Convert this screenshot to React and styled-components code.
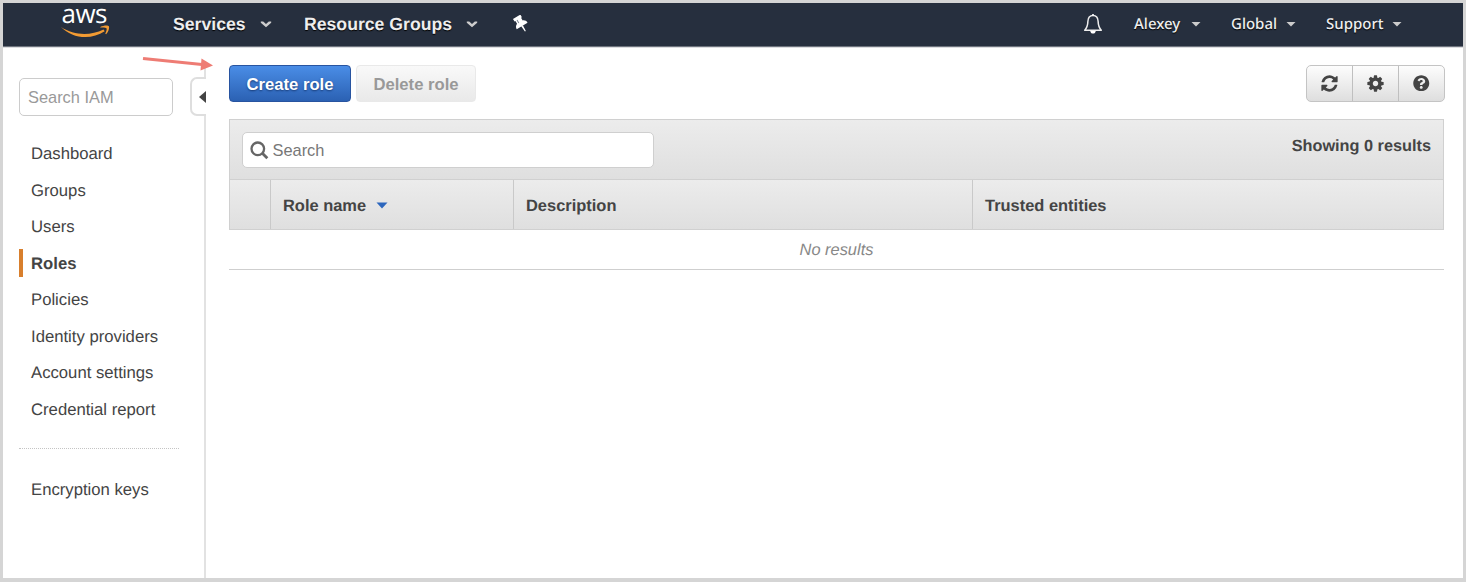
import React from 'react';
import styled, { createGlobalStyle, css } from 'styled-components';
import { FaQuestionCircle } from 'react-icons/fa';

const GlobalStyle = createGlobalStyle`
  * { box-sizing: border-box; }
  body { margin: 0; background: #d5d5d5; }
  button, input { font-family: inherit; }
`;

const Frame = styled.div`
  width: 1466px;
  height: 582px;
  padding: 3px 3px 4px;
  background: #d5d5d5;
  color: #444;
  font-family: 'Liberation Sans', Arial, sans-serif;
  font-size: 16.7px;
  line-height: 20px;
  text-rendering: geometricPrecision;
`;

const Page = styled.div`
  position: relative;
  display: flex;
  flex-direction: column;
  height: 575px;
  background: #fff;
`;

const Header = styled.header`
  display: flex;
  align-items: center;
  justify-content: space-between;
  flex: none;
  height: 44px;
  padding: 0 61px 2px 57px;
  background: #262f3e;
  border-bottom: 1px solid #6d737d;
  box-shadow: 0 1px 0 #dcdde0;
  color: #eee;
`;

const NavGroup = styled.nav`
  display: flex;
  align-items: center;
  height: 100%;
`;

const Logo = styled.svg`
  width: 50px;
  height: 40px;
  margin: -4px 63px 0 0;
  overflow: visible;
`;

const NavItem = styled.a`
  display: flex;
  align-items: center;
  width: ${(p) => p.$width}px;
  text-shadow: 0 1px 1px #000;
  ${(p) =>
    p.$primary
      ? css`
          gap: 14px;
          font-size: 17.65px;
          font-weight: 700;
        `
      : css`
          justify-content: space-between;
          margin-left: ${p.$before}px;
          font-family: 'Noto Sans', sans-serif;
          font-size: 15px;
          font-weight: 500;
        `}
`;

const Icon = styled.svg`
  display: block;
  flex: none;
`;

const Body = styled.div`
  display: flex;
  flex: 1;
  min-height: 0;
  padding-top: 18px;
`;

const Sidebar = styled.aside`
  display: flex;
  flex-direction: column;
  width: 203px;
  padding: 13px 0 0 16px;
  border-right: 2px solid #e2e2e2;
`;

const SideTop = styled.div`
  display: flex;
  justify-content: space-between;
  height: 39px;
  margin-right: -2px;
`;

const SideSearch = styled.input`
  width: 154px;
  height: 38px;
  padding: 0 7px 0 8px;
  border: 1px solid #cccccc;
  border-radius: 5px;
  background: #fff;
  color: #444;
  font-size: 16.4px;
  &::placeholder { color: #999; opacity: 1; }
`;

const Collapse = styled.button`
  display: flex;
  align-items: center;
  width: 16px;
  height: 39px;
  margin-top: -1px;
  padding: 0 0 0 7px;
  border: 2px solid #dedede;
  border-right: 0;
  border-radius: 7px 0 0 7px;
  background: #fff;
`;

const SideList = styled.ul`
  list-style: none;
  margin: ${(p) => p.$gap}px 0 0;
  padding: 0;
`;

const SideItem = styled.li`
  display: flex;
  align-items: center;
  height: 28px;
  margin-bottom: 8.5px;
  padding: 1px 0 0 8px;
  border-left: 4px solid ${(p) => (p.$active ? '#d87f2d' : 'transparent')};
  font-weight: ${(p) => (p.$active ? 700 : 400)};
`;

const Divider = styled.hr`
  width: 160px;
  margin: 16px 0 0;
  border: 0;
  border-top: 1px dotted #c4c4c4;
`;

const Main = styled.main`
  flex: 1;
  padding: 0 19px 0 23px;
`;

const Toolbar = styled.div`
  display: flex;
  justify-content: space-between;
  height: 37px;
`;

const ButtonRow = styled.div`
  display: flex;
  gap: 5px;
`;

const Button = styled.button`
  width: ${(p) => (p.$primary ? 122 : 120)}px;
  height: 37px;
  padding: 2px 0 0;
  border-radius: 4px;
  font-size: 16.65px;
  font-weight: 700;
  ${(p) =>
    p.$primary
      ? css`
          border: 1px solid #2854a0;
          background: linear-gradient(#4a8de6, #2b61b3);
          color: #fff;
          text-shadow: 0 1px 2px #173a75;
        `
      : css`
          border: 1px solid #e9e9e9;
          background: linear-gradient(#f9f9f9, #e9e9e9);
          color: #999;
        `}
`;

const IconGroup = styled.div`
  display: flex;
  width: 139px;
  height: 37px;
  margin-right: -1px;
  border: 1px solid #c4c4c4;
  border-radius: 5px;
  background: linear-gradient(#fdfdfd, #dedede);
`;

const IconButton = styled.button`
  display: flex;
  align-items: center;
  justify-content: center;
  flex: 1;
  padding: 0 0 1px;
  border: 0;
  background: none;
  color: #444;
  & + & { border-left: 1px solid #bfbfbf; }
`;

const Panel = styled.section`
  display: flex;
  justify-content: space-between;
  height: 61px;
  margin-top: 17px;
  padding: 12px;
  border: 1px solid #d0d0d0;
  background: linear-gradient(#ececec, #dfdfdf);
  font-size: 16.3px;
  font-weight: 700;
`;

const SearchBox = styled.label`
  display: flex;
  align-items: center;
  gap: 4px;
  width: 412px;
  height: 36px;
  padding-left: 6.5px;
  border: 1px solid #cfcfcf;
  border-radius: 5px;
  background: #fff;
`;

const SearchInput = styled.input`
  flex: 1;
  padding: 1px 0 0;
  border: 0;
  background: none;
  font-size: 16.4px;
  &::placeholder { color: #777; opacity: 1; }
`;

const Count = styled.span`
  padding-top: 4px;
`;

const Columns = styled.div`
  display: grid;
  grid-template-columns: 40px 243px 459px 1fr;
  height: 50px;
  border: 1px solid #d0d0d0;
  border-top: 0;
  background: linear-gradient(#ececec, #dfdfdf);
`;

const Column = styled.div`
  display: flex;
  align-items: center;
  gap: 10px;
  padding: 2px 0 0 12px;
  font-size: 16.45px;
  font-weight: 700;
  & + & { border-left: 1px solid #c9c9c9; }
`;

const Empty = styled.div`
  height: 40px;
  padding-top: 10px;
  border-bottom: 1px solid #cfcfcf;
  color: #888;
  font-size: 16.4px;
  font-style: italic;
  text-align: center;
`;

const Pointer = styled.svg`
  position: absolute;
  left: 137px;
  top: 50px;
`;

const NavCaret = ({ wide }) => (
  <Icon width={wide ? 12 : 10} height="8" viewBox="0 0 12 8">
    {wide ? (
      <path d="M.8 1.500h2.400L6 4l2.800-2.500h2.400v1.200L6 7.300.800 2.700z" fill="#ccc" />
    ) : (
      <path d="M.6 1.500h10.800L6 7z" fill="#ccc" />
    )}
  </Icon>
);

const AwsLogo = () => (
  <Logo viewBox="0 0 50 40">
    <text x="1.500" y="21.300" fill="#fff" fontFamily="Open Sans, sans-serif" fontSize="26" textLength="46">aws</text>
    <path d="M1 25C14 33.500 30 34 43.500 27.500l1.200 1.800C31 38.500 12 36.500 1 25z" fill="#f29b33" />
    <path d="M40.300 25c3-1.800 8-2 8.600-.8.700 1.400-.4 5.800-2.800 8l-.8-.4c1-2.300 1.800-4.800 1.200-5.600-.7-.7-3.800-.9-6.200-.6z" fill="#f29b33" />
  </Logo>
);

const Pin = () => (
  <Icon width="20" height="18" viewBox="0 0 20 18">
    <g transform="rotate(-31 10 9)" fill="#fff">
      <path d="M5.700.600h8.600v3h-1v3.200c2 .8 3 2.300 3 4.400H3.700c0-2.100 1-3.600 3-4.400V3.600h-1z" />
      <path d="M9 11h2l-.5 6.500h-1z" />
      <path d="M8.600 3.600v3.500" stroke="#77808d" strokeWidth=".9" />
    </g>
  </Icon>
);

const Bell = () => (
  <Icon width="20" height="22" viewBox="0 0 20 22">
    <path d="M10 2.400C6.600 2.400 5 5 4.900 8.300c-.1 4-.8 6.500-3.200 9h16.600c-2.400-2.500-3.100-5-3.200-9C15 5 13.400 2.400 10 2.400z" fill="none" stroke="#eee" strokeWidth="1.500" strokeLinejoin="round" />
    <path d="M9.200 1h1.600v1.800H9.200zM7.200 18h5.600c-.3 1.700-1.300 2.600-2.800 2.600S7.500 19.700 7.200 18z" fill="#fff" />
  </Icon>
);

const Refresh = () => (
  <Icon width="17" height="19" viewBox="0 0 1536 1792" fill="currentColor">
    <path d="M1511 1056q0 5-1 7-64 268-268 434.500t-478 166.500q-146 0-282.500-55t-243.500-157l-129 129q-19 19-45 19t-45-19-19-45v-448q0-26 19-45t45-19h448q26 0 45 19t19 45-19 45l-137 137q71 66 161 102t187 36q134 0 250-65t186-179q11-17 53-117 8-23 30-23h192q13 0 22.500 9.500t9.500 22.500zm25-800v448q0 26-19 45t-45 19h-448q-26 0-45-19t-19-45 19-45l138-138q-148-137-349-137-134 0-250 65t-186 179q-11 17-53 117-8 23-30 23h-199q-13 0-22.500-9.500t-9.500-22.500v-7q65-268 270-434.500t480-166.500q146 0 284 55.500t245 156.500l130-129q19-19 45-19t45 19 19 45z" />
  </Icon>
);

const Gear = () => (
  <Icon width="19" height="19" viewBox="0 0 1792 1792" fill="currentColor">
    <path d="M1152 896q0-106-75-181t-181-75-181 75-75 181 75 181 181 75 181-75 75-181zm512-109v222q0 12-8 23t-20 13l-185 28q-19 54-39 91 35 50 107 138 10 12 10 25t-9 23q-27 37-99 108t-94 71q-12 0-26-9l-138-108q-44 23-91 38-16 136-29 186-7 28-36 28h-222q-14 0-24.500-8.500t-11.500-21.500l-28-184q-49-16-90-37l-141 107q-10 9-25 9-14 0-25-11-126-114-165-168-7-10-7-23 0-12 8-23 15-21 51-66.500t54-70.500q-27-50-41-99l-183-27q-13-2-21-12.500t-8-23.500v-222q0-12 8-23t19-13l186-28q14-46 39-92-40-57-107-138-10-12-10-24 0-10 9-23 26-36 98.500-107.500t94.500-71.500q13 0 26 10l138 107q44-23 91-38 16-136 29-186 7-28 36-28h222q14 0 24.500 8.500t11.500 21.500l28 184q49 16 90 37l142-107q9-9 24-9 13 0 25 10 129 119 165 170 7 8 7 22 0 12-8 23-15 21-51 66.500t-54 70.500q26 50 41 98l183 28q13 2 21 12.500t8 23.500z" />
  </Icon>
);

const links = ['Dashboard', 'Groups', 'Users', 'Roles', 'Policies', 'Identity providers', 'Account settings', 'Credential report'];

export default function App() {
  return (
    <Frame>
      <GlobalStyle />
      <Page>
        <Header>
          <NavGroup>
            <AwsLogo />
            <NavItem $primary $width={131}>Services<NavCaret wide /></NavItem>
            <NavItem $primary $width={207}>Resource Groups<NavCaret wide /></NavItem>
            <Pin />
          </NavGroup>
          <NavGroup>
            <Bell />
            <NavItem $width={67} $before={31}>Alexey<NavCaret /></NavItem>
            <NavItem $width={65} $before={30}>Global<NavCaret /></NavItem>
            <NavItem $width={76} $before={30}>Support<NavCaret /></NavItem>
          </NavGroup>
        </Header>
        <Body>
          <Sidebar>
            <SideTop>
              <SideSearch placeholder="Search IAM" />
              <Collapse aria-label="Collapse">
                <Icon width="7" height="12" viewBox="0 0 7 12"><path d="M7 0v12L0 6z" fill="#444" /></Icon>
              </Collapse>
            </SideTop>
            <SideList $gap={22.5}>
              {links.map((label) => (
                <SideItem key={label} $active={label === 'Roles'}>{label}</SideItem>
              ))}
            </SideList>
            <Divider />
            <SideList as="div" $gap={26.5}>
              <SideItem as="div">Encryption keys</SideItem>
            </SideList>
          </Sidebar>
          <Main>
            <Toolbar>
              <ButtonRow>
                <Button $primary>Create role</Button>
                <Button>Delete role</Button>
              </ButtonRow>
              <IconGroup>
                <IconButton aria-label="Refresh"><Refresh /></IconButton>
                <IconButton aria-label="Settings"><Gear /></IconButton>
                <IconButton aria-label="Help"><FaQuestionCircle size={16.5} /></IconButton>
              </IconGroup>
            </Toolbar>
            <Panel>
              <SearchBox>
                <Icon width="19" height="19" viewBox="0 0 19 19" fill="none" stroke="#666">
                  <circle cx="7.800" cy="7.800" r="6.300" strokeWidth="2.300" />
                  <path d="m12.300 12.300 5 5" strokeWidth="2.800" />
                </Icon>
                <SearchInput placeholder="Search" />
              </SearchBox>
              <Count>Showing 0 results</Count>
            </Panel>
            <Columns>
              <Column />
              <Column>
                Role name
                <Icon width="12" height="7" viewBox="0 0 12 7"><path d="M.5.500h11L6 6.500z" fill="#2c66bd" /></Icon>
              </Column>
              <Column>Description</Column>
              <Column>Trusted entities</Column>
            </Columns>
            <Empty>No results</Empty>
          </Main>
        </Body>
        <Pointer width="74" height="22" viewBox="0 0 74 22">
          <path d="M3 5.500 62 11.500" stroke="#ee7c74" strokeWidth="3.200" />
          <path d="M61.500 5.500 73 12.500 60.500 17.500z" fill="#ee7c74" />
        </Pointer>
      </Page>
    </Frame>
  );
}
